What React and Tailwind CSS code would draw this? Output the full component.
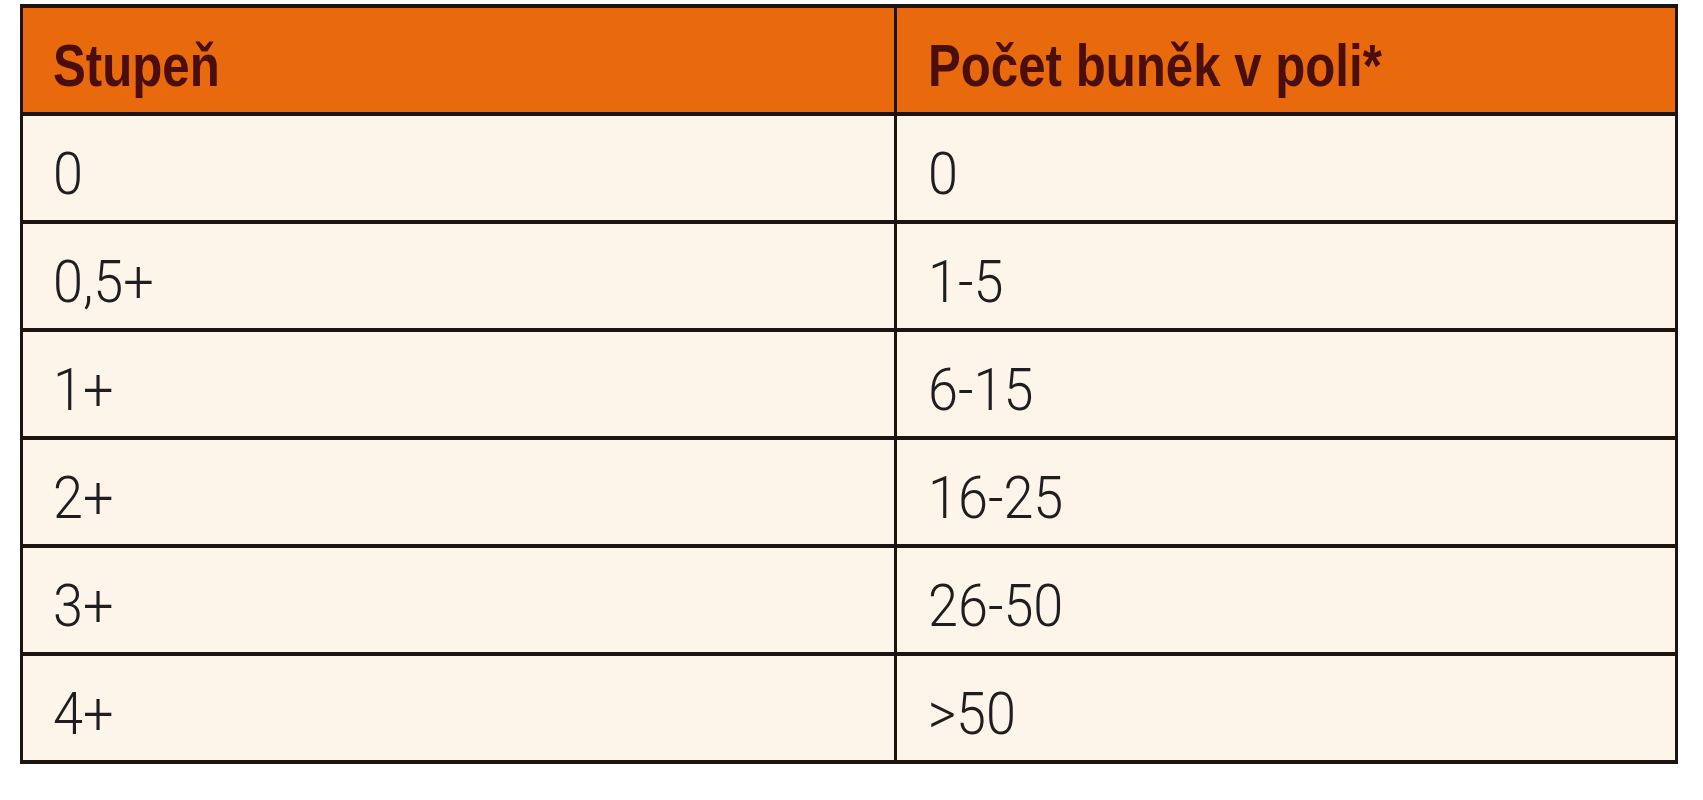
const rows = [
  ["0", "0"],
  ["0,5+", "1-5"],
  ["1+", "6-15"],
  ["2+", "16-25"],
  ["3+", "26-50"],
  ["4+", ">50"],
];

function Cell({ children, head, last }) {
  return (
    <div
      className={
        "h-[104px] pt-[28px] text-[60px] leading-[60px] " +
        (last ? "pl-[31px] " : "pl-[30px] border-r-[3px] border-[#1c1410] ") +
        (head
          ? "bg-[#e96a0c] font-bold text-[#4a0f0c] font-['Liberation_Sans',sans-serif]"
          : "bg-[#fdf4ea] text-[#1e1e1e] font-light font-['Roboto',sans-serif]")
      }
    >
      <span className={"inline-block origin-left whitespace-nowrap " + (head ? "scale-x-[0.82]" : "scale-x-[0.9]")}>
        {children}
      </span>
    </div>
  );
}

export default function App() {
  return (
    <div className="min-h-screen bg-white pl-[20px] pt-[4px]">
      <div className="w-[1658px] border-x-[3px] border-t-[4px] border-[#1c1410]">
        <div className="grid grid-cols-[874px_778px] border-b-[4px] border-[#1c1410]">
          <Cell head>Stupeň</Cell>
          <Cell head last>Počet buněk v poli*</Cell>
        </div>
        {rows.map(([a, b]) => (
          <div key={a} className="grid grid-cols-[874px_778px] border-b-[4px] border-[#1c1410]">
            <Cell>{a}</Cell>
            <Cell last>{b}</Cell>
          </div>
        ))}
      </div>
    </div>
  );
}
